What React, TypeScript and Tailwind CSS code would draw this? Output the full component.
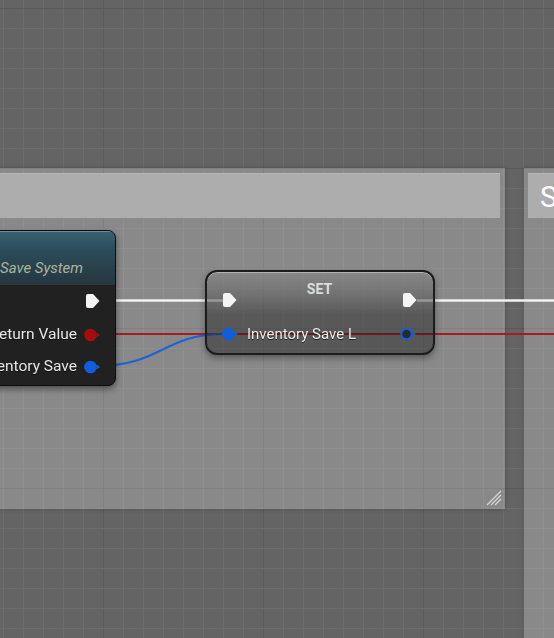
import React from "react";

const W = 554;
const H = 638;

function GridBg() {
  const xs: number[] = [];
  for (let x = 3; x < W; x += 20) xs.push(x);
  const ys: number[] = [];
  for (let y = 8; y < H; y += 20) ys.push(y);
  return (
    <svg className="absolute inset-0" width={W} height={H}>
      <rect width={W} height={H} fill="#646464" />
      {xs.map((x) => (
        <rect key={"x" + x} x={x} y={0} width={1} height={H} fill={(x - 103) % 160 === 0 ? "#5a5a5a" : "#6c6c6c"} />
      ))}
      {ys.map((y) => (
        <rect key={"y" + y} x={0} y={y} width={W} height={1} fill={(y - 8) % 160 === 0 ? "#5a5a5a" : "#6c6c6c"} />
      ))}
    </svg>
  );
}

function ExecPin() {
  return (
    <svg width="15" height="16" viewBox="0 0 15 16" className="shrink-0">
      <path d="M1 3 Q1 1 3 1 L8 1 L14.5 8 L8 15 L3 15 Q1 15 1 13 Z" fill="#f4f4f4" />
    </svg>
  );
}

function DataPin({ color, hollow }: { color: string; hollow?: boolean }) {
  return (
    <svg width="17" height="14" viewBox="0 0 17 14" className="shrink-0">
      {hollow ? (
        <circle cx="6.5" cy="7" r="5.2" fill="#2a2a2a" stroke={color} strokeWidth="2" />
      ) : (
        <circle cx="6.5" cy="7" r="6.3" fill={color} />
      )}
      <path d="M12.5 4.5 L16 7 L12.5 9.5 Z" fill={color} />
    </svg>
  );
}

export default function App() {
  return (
    <div className="relative w-[554px] h-[638px] overflow-hidden bg-[#646464] font-['Roboto',sans-serif]">
      <GridBg />

      {/* Comment box 1 */}
      <div className="absolute left-[-20px] top-[168px] w-[525px] h-[341px] bg-[rgba(255,255,255,0.24)] shadow-[0_0_4px_rgba(0,0,0,0.25)] pt-[5px] pr-[5px]">
        <div className="h-[45px] bg-[#adadad] border-t border-[#b6b6b6]" />
        <svg className="absolute right-[3px] bottom-[3px]" width="18" height="18" viewBox="0 0 18 18">
          <path d="M3 17 L17 3 M7 17 L17 7 M11 17 L17 11" stroke="#d4d4d4" strokeWidth="1.3" />
        </svg>
      </div>

      {/* Comment box 2 */}
      <div className="absolute left-[524px] top-[168px] w-[60px] h-[480px] bg-[rgba(255,255,255,0.24)] shadow-[0_0_4px_rgba(0,0,0,0.25)] pt-[5px] pl-[4px]">
        <div className="h-[45px] bg-[#adadad] border-t border-[#b6b6b6] pl-[12px] flex items-center">
          <span className="text-[29px] leading-none text-white mt-[2px]">S</span>
        </div>
      </div>

      {/* Wires */}
      <svg className="absolute inset-0 pointer-events-none" width={W} height={H}>
        <line x1="101" y1="300.5" x2="223" y2="300.5" stroke="#f2f2f2" strokeWidth="2.6" />
        <line x1="417" y1="300.5" x2="554" y2="300.5" stroke="#f2f2f2" strokeWidth="2.6" />
        <line x1="97" y1="334" x2="554" y2="334" stroke="#a81c1c" strokeWidth="2.2" />
        <path d="M97 366 C 160 366, 165 334, 223 334" fill="none" stroke="#1e62d4" strokeWidth="2" />
      </svg>

      {/* Node 1 */}
      <div className="absolute left-[-124px] top-[230px] w-[240px] h-[156px] rounded-[8px] border border-[#0e0e0e] bg-[#212121] shadow-[0_3px_6px_rgba(0,0,0,0.45)] overflow-hidden flex flex-col">
        <div className="h-[54px] bg-[linear-gradient(to_bottom,#3a6172_0%,#2c4c5b_35%,#26363e_100%)] shadow-[inset_0_1px_0_rgba(140,190,210,0.5)] flex items-end pb-[9px] pl-[123px]">
          <span className="text-[15px] italic leading-none text-[#a9b59f]">Save System</span>
        </div>
        <div className="h-[32px] flex items-center justify-end pr-[15px]">
          <ExecPin />
        </div>
        <div className="mt-[2px] h-[32px] flex items-center justify-end pr-[14px] gap-[7px]">
          <span className="text-[15.5px] text-[#e6e6e6] drop-shadow-[0_1px_0_rgba(0,0,0,0.6)]">Return Value</span>
          <DataPin color="#a30d0d" />
        </div>
        <div className="h-[32px] flex items-center justify-end pr-[14px] gap-[7px]">
          <span className="text-[15.5px] text-[#e6e6e6] drop-shadow-[0_1px_0_rgba(0,0,0,0.6)]">Inventory Save</span>
          <DataPin color="#0f5fdc" />
        </div>
      </div>

      {/* SET node */}
      <div className="absolute left-[205px] top-[270px] w-[230px] h-[85px] rounded-[12px] border-2 border-[#1c1c1c] bg-[linear-gradient(to_bottom,rgba(135,135,135,0.75)_0%,rgba(95,95,95,0.6)_30%,rgba(30,30,30,0.45)_52%,rgba(25,25,25,0.45)_100%)] shadow-[inset_0_1px_0_rgba(255,255,255,0.35),0_3px_6px_rgba(0,0,0,0.35)] flex flex-col">
        <div className="flex items-start justify-between pt-[9px] pl-[15px] pr-[16px]">
          <div className="mt-[11px]"><ExecPin /></div>
          <span className="text-[14px] font-bold leading-[16px] text-[#dcdcdc]">SET</span>
          <div className="mt-[11px]"><ExecPin /></div>
        </div>
        <div className="mt-[18px] flex items-center pl-[15px] pr-[16px]">
          <DataPin color="#0f5fdc" />
          <span className="ml-[8px] text-[15px] leading-[16px] text-[#ececec] drop-shadow-[0_1px_0_rgba(0,0,0,0.6)]">Inventory Save L</span>
          <div className="ml-auto"><DataPin color="#1560d8" hollow /></div>
        </div>
      </div>
    </div>
  );
}
